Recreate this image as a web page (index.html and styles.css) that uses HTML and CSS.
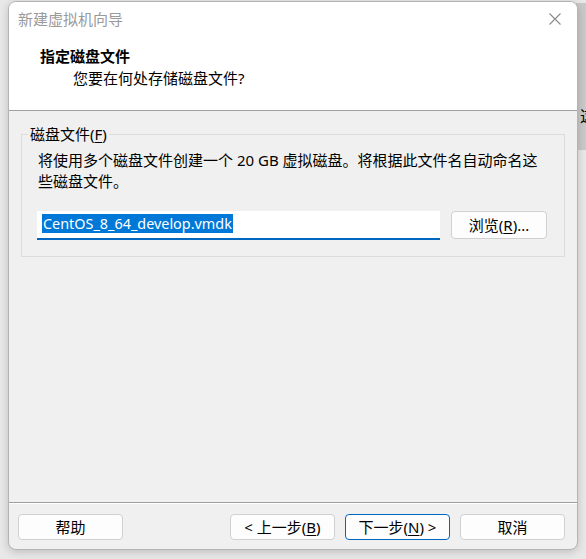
FILE: index.html
```html
<!DOCTYPE html>
<html lang="zh-CN">
<head>
<meta charset="utf-8">
<title>新建虚拟机向导</title>
<link rel="stylesheet" href="styles.css">
</head>
<body>
<div class="backwin"><span class="backtext">这</span></div>
<div class="window">
  <div class="header">
    <div class="titlebar">
      <span class="wintitle">新建虚拟机向导</span>
      <svg class="close" width="12" height="12" viewBox="0 0 12 12"><path d="M0.5 0.5 L11.5 11.5 M11.5 0.5 L0.5 11.5" stroke="#8a8a8a" stroke-width="1.1" fill="none"/></svg>
    </div>
    <div class="htitle">指定磁盘文件</div>
    <div class="hsub">您要在何处存储磁盘文件?</div>
  </div>
  <div class="body">
    <fieldset class="group">
      <legend class="glabel">磁盘文件(<u>F</u>)</legend>
      <div class="desc">将使用多个磁盘文件创建一个 20 GB 虚拟磁盘。将根据此文件名自动命名这<br>些磁盘文件。</div>
      <div class="filerow">
        <div class="input"><span class="sel">CentOS_8_64_develop.vmdk</span></div>
        <div class="btn browse">浏览(<u>R</u>)...</div>
      </div>
    </fieldset>
  </div>
  <div class="footer">
    <div class="btn">帮助</div>
    <div class="spacer"></div>
    <div class="btn">&lt; 上一步(<u>B</u>)</div>
    <div class="btn focused">下一步(<u>N</u>) &gt;</div>
    <div class="btn">取消</div>
  </div>
</div>
</body>
</html>
```
FILE: styles.css
```css
html, body {
  margin: 0;
  padding: 0;
}
body {
  width: 586px;
  height: 559px;
  overflow: hidden;
  background: #e8e8e8;
  font-family: "Noto Sans", "Noto Sans CJK SC", sans-serif;
  font-size: 15px;
  color: #000;
}
.backwin {
  position: absolute;
  left: 576px;
  top: 3px;
  width: 20px;
  height: 147px;
  background: #c9c9c9;
}
.backtext {
  position: absolute;
  left: 4px;
  top: 103px;
  font-size: 16px;
  line-height: 20px;
  color: #000;
}
.window {
  position: relative;
  margin: 1px 0 0 8px;
  width: 568px;
  height: 547px;
  border: 1px solid #b4b4b4;
  border-radius: 8px;
  overflow: hidden;
  background: #f0f0f0;
  box-shadow: 0 2px 8px rgba(0, 0, 0, 0.18);
  display: flex;
  flex-direction: column;
}
.header {
  background: #fff;
  height: 108px;
  border-bottom: 1px solid #a0a0a0;
}
.titlebar {
  height: 34px;
  display: flex;
  align-items: center;
  justify-content: space-between;
  padding: 0 16px 0 9px;
}
.wintitle {
  color: #9a9a9a;
  font-size: 15px;
  line-height: 20px;
}
.close {
  display: block;
}
.htitle {
  margin: 10px 0 0 31px;
  font-weight: bold;
  font-size: 15px;
  line-height: 20px;
}
.hsub {
  margin: 2px 0 0 64px;
  line-height: 20px;
}
.body {
  height: 391px;
  padding: 13px 12px 0 12px;
  box-sizing: border-box;
}
.group {
  margin: 0;
  padding: 0 16px 16px 6px;
  border: 1px solid #dcdcdc;
  min-width: 0;
}
.glabel {
  padding: 0 2px;
  line-height: 20px;
}
.desc {
  margin: 6px 0 0 10px;
  line-height: 21px;
  white-space: nowrap;
}
.filerow {
  display: flex;
  align-items: flex-start;
  margin: 19px 0 0 9px;
  gap: 11px;
}
.input {
  width: 403px;
  height: 29px;
  box-sizing: border-box;
  background: #fff;
  border-bottom: 2px solid #0067c0;
  padding: 2px 0 0 5px;
}
.sel {
  display: inline-block;
  background: #0078d7;
  color: #fff;
  font-size: 14.4px;
  line-height: 19px;
  padding: 0 1px;
}
.btn {
  width: 105px;
  height: 26px;
  box-sizing: border-box;
  border: 1px solid #d0d0d0;
  border-radius: 4px;
  background: #fdfdfd;
  display: flex;
  align-items: center;
  justify-content: center;
  line-height: 20px;
}
.browse {
  width: 96px;
  height: 28px;
}
.focused {
  border-color: #0067c0;
}
.footer {
  flex: 1;
  border-top: 1px solid #a0a0a0;
  box-shadow: inset 0 1px 0 #fff;
  display: flex;
  align-items: flex-start;
  padding: 11px 12px 0 9px;
  gap: 10px;
}
.spacer {
  flex: 1;
}
u {
  text-decoration-thickness: 1px;
  text-underline-offset: 2px;
}
```
